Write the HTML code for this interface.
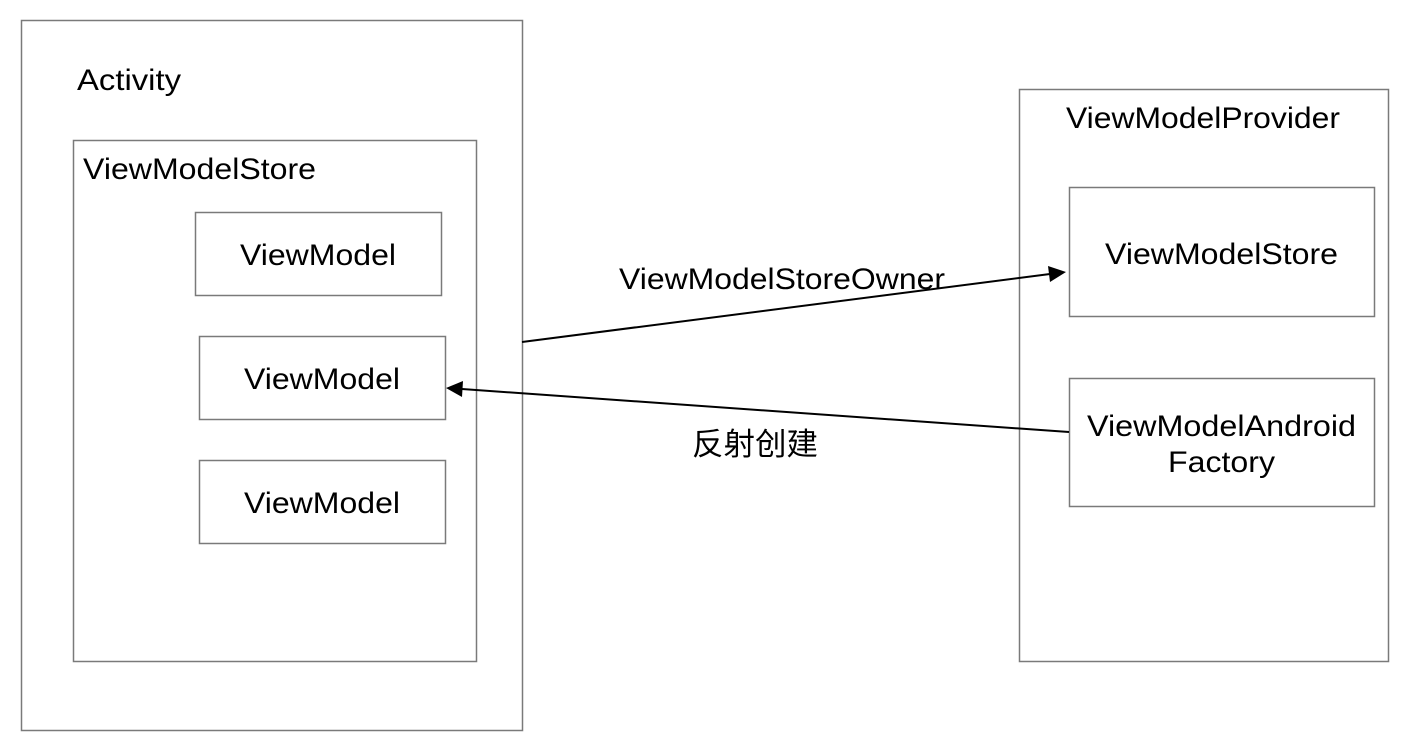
<!DOCTYPE html>
<html><head><meta charset="utf-8"><style>
html,body{margin:0;padding:0;background:#fff;}
svg{display:block;}
text{font-family:"Liberation Sans","Noto Sans CJK SC",sans-serif;font-size:30px;fill:#000;}
</style></head><body>
<svg width="1422" height="752" viewBox="0 0 1422 752" xmlns="http://www.w3.org/2000/svg">
<g fill="none" stroke="#7a7a7a" stroke-width="1.5">
<rect x="21.5" y="20.5" width="501" height="710"/>
<rect x="73.5" y="140.5" width="403" height="521"/>
<rect x="195.5" y="212.5" width="246" height="83"/>
<rect x="199.5" y="336.5" width="246" height="83"/>
<rect x="199.5" y="460.5" width="246" height="83"/>
<rect x="1019.5" y="89.5" width="369" height="572"/>
<rect x="1069.5" y="187.5" width="305" height="129"/>
<rect x="1069.5" y="378.5" width="305" height="128"/>
</g>
<g stroke="#000" stroke-width="2" fill="#000">
<line x1="522" y1="342" x2="1050" y2="274"/>
<polygon points="1066,272 1048,266 1050,282" stroke="none"/>
<line x1="1069" y1="432" x2="462" y2="389"/>
<polygon points="446,388 463,381 462,397" stroke="none"/>
</g>
<text x="77" y="90" textLength="104" lengthAdjust="spacingAndGlyphs">Activity</text>
<text x="83" y="179" textLength="233" lengthAdjust="spacingAndGlyphs">ViewModelStore</text>
<text x="240" y="265" textLength="156" lengthAdjust="spacingAndGlyphs">ViewModel</text>
<text x="244" y="389" textLength="156" lengthAdjust="spacingAndGlyphs">ViewModel</text>
<text x="244" y="513" textLength="156" lengthAdjust="spacingAndGlyphs">ViewModel</text>
<text x="1066" y="128" textLength="274" lengthAdjust="spacingAndGlyphs">ViewModelProvider</text>
<text x="1105" y="264" textLength="233" lengthAdjust="spacingAndGlyphs">ViewModelStore</text>
<text x="1087" y="436" textLength="269" lengthAdjust="spacingAndGlyphs">ViewModelAndroid</text>
<text x="1168" y="472" textLength="107" lengthAdjust="spacingAndGlyphs">Factory</text>
<text x="619" y="289" textLength="326" lengthAdjust="spacingAndGlyphs">ViewModelStoreOwner</text>
<text x="692" y="455" style="font-size:31px" textLength="126" lengthAdjust="spacingAndGlyphs">反射创建</text>
</svg>
</body></html>
